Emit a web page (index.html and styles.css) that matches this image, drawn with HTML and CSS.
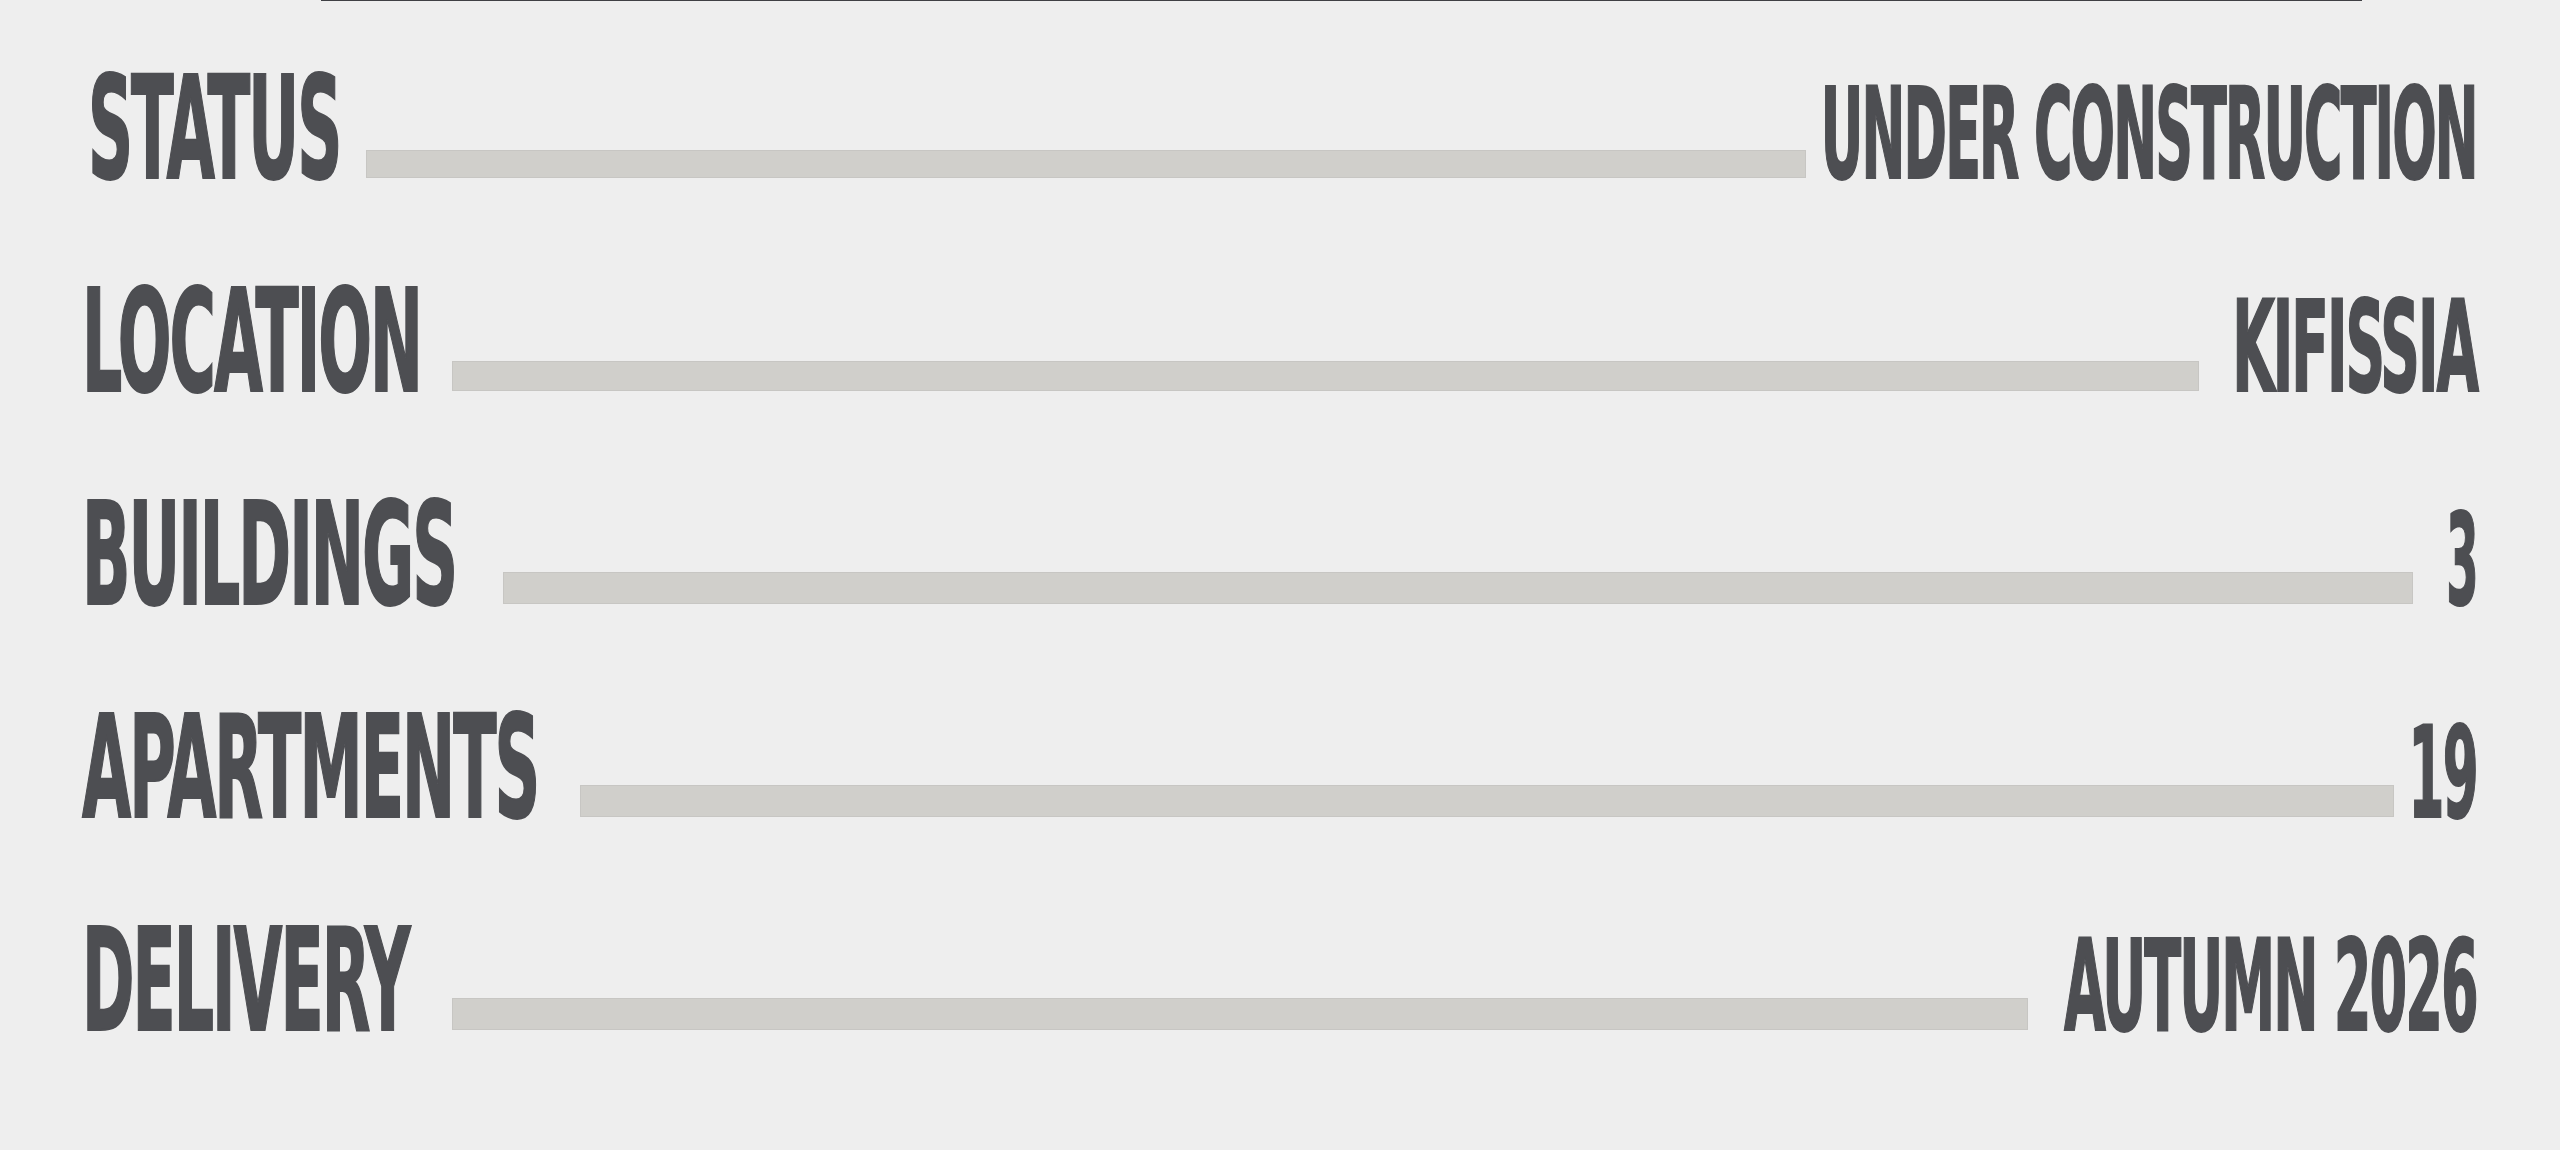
FILE: index.html
```html
<!DOCTYPE html>
<html lang="en">
<head>
<meta charset="utf-8">
<title>Project facts</title>
<link rel="stylesheet" href="styles.css">
</head>
<body>
  <div class="topline"></div>
  <div class="facts">
    <div class="row row-status">
      <div class="label"><span class="txt">STATUS</span></div>
      <div class="bar"></div>
      <div class="value"><span class="txt">UNDER CONSTRUCTION</span></div>
    </div>
    <div class="row row-location">
      <div class="label"><span class="txt">LOCATION</span></div>
      <div class="bar"></div>
      <div class="value"><span class="txt">KIFISSIA</span></div>
    </div>
    <div class="row row-buildings">
      <div class="label"><span class="txt">BUILDINGS</span></div>
      <div class="bar"></div>
      <div class="value"><span class="txt">3</span></div>
    </div>
    <div class="row row-apartments">
      <div class="label"><span class="txt">APARTMENTS</span></div>
      <div class="bar"></div>
      <div class="value"><span class="txt">19</span></div>
    </div>
    <div class="row row-delivery">
      <div class="label"><span class="txt">DELIVERY</span></div>
      <div class="bar"></div>
      <div class="value"><span class="txt">AUTUMN 2026</span></div>
    </div>
  </div>
</body>
</html>
```
FILE: styles.css
```css
html, body {
  margin: 0;
  padding: 0;
}
body {
  background: #eeeeee;
  width: 2560px;
  height: 1150px;
  overflow: hidden;
  font-family: "DejaVu Sans Condensed", "DejaVu Sans", "Liberation Sans", sans-serif;
  font-weight: 700;
  color: #4d4e52;
}
.topline {
  height: 1px;
  margin-left: 321px;
  width: 2041px;
  background: #3f4044;
}
.facts {
  display: flex;
  flex-direction: column;
  padding: 57px 83px 0 82px;
}
.row {
  display: flex;
  align-items: baseline;
  height: 213px;
}
.label {
  flex: none;
  display: flex;
  justify-content: flex-start;
  align-items: baseline;
}
.label .txt {
  display: inline-block;
  font-size: 142px;
  line-height: 1;
  letter-spacing: -4px;
  white-space: nowrap;
  -webkit-text-stroke: 2px #4d4e52;
  transform-origin: left bottom;
}
.value {
  flex: none;
  display: flex;
  justify-content: flex-end;
  align-items: baseline;
}
.value .txt {
  display: inline-block;
  font-size: 126px;
  line-height: 1;
  letter-spacing: -4px;
  white-space: nowrap;
  -webkit-text-stroke: 2px #4d4e52;
  transform-origin: right bottom;
}
.bar {
  flex: 1;
  height: 31px;
  box-sizing: border-box;
  background: #d0cfcb;
  border: 1px solid #c7c6c3;
}

.row-status .label { width: 284px; }
.row-status .label .txt { margin-left: 6px; transform: scaleX(0.49); }
.row-status .value { width: 671px; }
.row-status .value .txt { transform: scaleX(0.462); }
.row-status .bar { height: 28px; }

.row-location .label { width: 370px; }
.row-location .label .txt { transform: scaleX(0.495); }
.row-location .value { width: 278px; }
.row-location .value .txt { transform: scaleX(0.485); }
.row-location .bar { height: 30px; }

.row-buildings .label { width: 421px; }
.row-buildings .label .txt { transform: scaleX(0.498); }
.row-buildings .value { width: 64px; }
.row-buildings .value .txt { transform: scaleX(0.41); }
.row-buildings .bar { height: 32px; }

.row-apartments .label { width: 498px; }
.row-apartments .label .txt { transform: scaleX(0.497); }
.row-apartments .value { width: 83px; }
.row-apartments .value .txt { transform: scaleX(0.455); }
.row-apartments .bar { height: 32px; }

.row-delivery .label { width: 370px; }
.row-delivery .label .txt { transform: scaleX(0.495); }
.row-delivery .value { width: 449px; }
.row-delivery .value .txt { transform: scaleX(0.478); }
.row-delivery .bar { height: 32px; }
```
